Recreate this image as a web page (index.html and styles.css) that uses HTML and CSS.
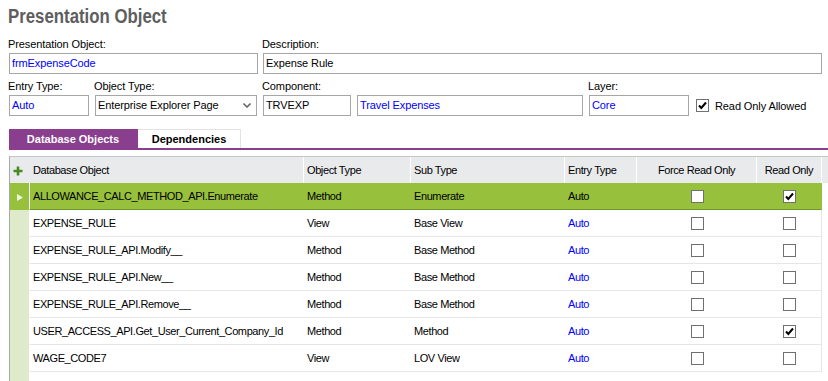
FILE: index.html
```html
<!DOCTYPE html>
<html>
<head>
	<meta charset="utf-8">
	<title>Presentation Object</title>
	<link rel="stylesheet" href="styles.css">
</head>
<body>
<div id="page">
	<h1 class="title"><span>Presentation Object</span></h1>

	<div class="form-row row-one">
		<div class="field w-po">
			<div class="label">Presentation Object:</div>
			<div class="box blue">frmExpenseCode</div>
		</div>
		<div class="field w-desc">
			<div class="label">Description:</div>
			<div class="box">Expense Rule</div>
		</div>
	</div>

	<div class="form-row row-two">
		<div class="field w-entry">
			<div class="label">Entry Type:</div>
			<div class="box blue">Auto</div>
		</div>
		<div class="field w-objtype">
			<div class="label">Object Type:</div>
			<div class="box select">
				<span>Enterprise Explorer Page</span>
				<svg class="chevron" width="8" height="5" viewBox="0 0 8 5"><polyline points="0.5,0.5 4,4 7.5,0.5" fill="none" stroke="#6a6a6a" stroke-width="1.6"/></svg>
			</div>
		</div>
		<div class="field w-comp">
			<div class="label">Component:</div>
			<div class="box">TRVEXP</div>
		</div>
		<div class="field w-travel">
			<div class="label">&nbsp;</div>
			<div class="box blue">Travel Expenses</div>
		</div>
		<div class="field w-layer">
			<div class="label">Layer:</div>
			<div class="box blue">Core</div>
		</div>
		<div class="field w-check">
			<div class="label">&nbsp;</div>
			<div class="check-line">
				<span class="cb checked"><svg width="11" height="11" viewBox="0 0 11 11"><polyline points="2,5.5 4.3,8 9,2.5" fill="none" stroke="#000" stroke-width="2"/></svg></span>
				<span>Read Only Allowed</span>
			</div>
		</div>
	</div>

	<div class="tabs">
		<div class="tab active">Database Objects</div>
		<div class="tab">Dependencies</div>
	</div>

	<div class="grid-wrap">
		<table class="grid">
			<tr class="head">
				<th class="c-gut"><svg width="10" height="10" viewBox="0 0 10 10"><path d="M5 0.5V9.5M0.5 5H9.5" stroke="#4b8a1c" stroke-width="2.6"/></svg></th>
				<th class="c-db">Database Object</th>
				<th class="c-ot">Object Type</th>
				<th class="c-st">Sub Type</th>
				<th class="c-et">Entry Type</th>
				<th class="c-fro center">Force Read Only</th>
				<th class="c-ro center">Read Only</th>
				<th class="c-fill"></th>
			</tr>
			<tr class="sel">
				<td class="c-gut"><svg width="6" height="7" viewBox="0 0 6 7"><polygon points="0,0 6,3.5 0,7" fill="#eef4e0"/></svg></td>
				<td>ALLOWANCE_CALC_METHOD_API.Enumerate</td>
				<td>Method</td>
				<td>Enumerate</td>
				<td>Auto</td>
				<td class="center"><span class="cb"></span></td>
				<td class="center c-ro"><span class="cb checked"><svg width="11" height="11" viewBox="0 0 11 11"><polyline points="2,5.5 4.3,8 9,2.5" fill="none" stroke="#000" stroke-width="2"/></svg></span></td>
				<td class="c-fill"></td>
			</tr>
			<tr>
				<td class="c-gut"></td>
				<td>EXPENSE_RULE</td>
				<td>View</td>
				<td>Base View</td>
				<td class="blue">Auto</td>
				<td class="center"><span class="cb"></span></td>
				<td class="center c-ro"><span class="cb"></span></td>
				<td class="c-fill"></td>
			</tr>
			<tr>
				<td class="c-gut"></td>
				<td>EXPENSE_RULE_API.Modify__</td>
				<td>Method</td>
				<td>Base Method</td>
				<td class="blue">Auto</td>
				<td class="center"><span class="cb"></span></td>
				<td class="center c-ro"><span class="cb"></span></td>
				<td class="c-fill"></td>
			</tr>
			<tr>
				<td class="c-gut"></td>
				<td>EXPENSE_RULE_API.New__</td>
				<td>Method</td>
				<td>Base Method</td>
				<td class="blue">Auto</td>
				<td class="center"><span class="cb"></span></td>
				<td class="center c-ro"><span class="cb"></span></td>
				<td class="c-fill"></td>
			</tr>
			<tr>
				<td class="c-gut"></td>
				<td>EXPENSE_RULE_API.Remove__</td>
				<td>Method</td>
				<td>Base Method</td>
				<td class="blue">Auto</td>
				<td class="center"><span class="cb"></span></td>
				<td class="center c-ro"><span class="cb"></span></td>
				<td class="c-fill"></td>
			</tr>
			<tr>
				<td class="c-gut"></td>
				<td>USER_ACCESS_API.Get_User_Current_Company_Id</td>
				<td>Method</td>
				<td>Method</td>
				<td class="blue">Auto</td>
				<td class="center"><span class="cb"></span></td>
				<td class="center c-ro"><span class="cb checked"><svg width="11" height="11" viewBox="0 0 11 11"><polyline points="2,5.5 4.3,8 9,2.5" fill="none" stroke="#000" stroke-width="2"/></svg></span></td>
				<td class="c-fill"></td>
			</tr>
			<tr>
				<td class="c-gut"></td>
				<td>WAGE_CODE7</td>
				<td>View</td>
				<td>LOV View</td>
				<td class="blue">Auto</td>
				<td class="center"><span class="cb"></span></td>
				<td class="center c-ro"><span class="cb"></span></td>
				<td class="c-fill"></td>
			</tr>
			<tr class="empty">
				<td class="c-gut"></td>
				<td colspan="7"></td>
			</tr>
		</table>
	</div>
</div>
</body>
</html>
```

FILE: styles.css
```css
html, body
{
	margin: 0;
	background: #fff;
	overflow: hidden;
}
#page
{
	font-family: "Liberation Sans", Arial, sans-serif;
	font-size: 11px;
	color: #000;
}
.title
{
	margin: 0;
	padding: 4px 0 0 8px;
	height: 24px;
	line-height: 24px;
	font-family: "Liberation Sans", Arial, sans-serif;
	font-size: 20px;
	font-weight: bold;
	color: #5e5e5e;
	white-space: nowrap;
}
/* the original face is a condensed bold, squeeze it */
.title span
{
	display: inline-block;
	transform: scaleX(0.84);
	transform-origin: left center;
}

/* form rows */
.form-row
{
	display: flex;
	padding-left: 9px;
	letter-spacing: -0.1px;
}
.row-one
{
	margin-top: 10px;
	gap: 5px;
}
.row-two
{
	margin-top: 6px;
	gap: 6px;
}
.label
{
	height: 13px;
	line-height: 13px;
	margin-left: -1px;
	margin-bottom: 2px;
	white-space: nowrap;
}
.box
{
	box-sizing: border-box;
	height: 21px;
	line-height: 19px;
	border: 1px solid #a6a6a6;
	padding: 0 2px;
	white-space: nowrap;
	overflow: hidden;
}
.blue
{
	color: #0000ff;
}
.select
{
	display: flex;
	align-items: center;
	justify-content: space-between;
	padding-right: 5px;
}
.w-po { width: 249px; }
.w-desc { width: 559px; }
.w-entry { width: 80px; }
.w-objtype { width: 162px; }
.w-comp { width: 88px; }
.w-travel { width: 226px; }
.w-layer { width: 100px; }
.w-check { margin-left: 1px; }
.check-line
{
	display: flex;
	align-items: center;
	gap: 6px;
	height: 21px;
}

/* checkbox */
.cb
{
	display: inline-flex;
	align-items: center;
	justify-content: center;
	box-sizing: border-box;
	width: 13px;
	height: 13px;
	border: 1px solid #707070;
	background: #fff;
	vertical-align: middle;
}

/* tabs */
.tabs
{
	display: flex;
	margin: 13px 0 0 9px;
	border-bottom: 2px solid #8a3e8e;
}
.tab
{
	box-sizing: border-box;
	height: 19px;
	line-height: 18px;
	padding: 0 13px;
	width: 103px;
	text-align: center;
	font-weight: bold;
	border-top: 1px solid #e3e3e3;
	border-right: 1px solid #e3e3e3;
}
.tab.active
{
	width: 129px;
	background: #8a3e8e;
	border-color: #8a3e8e;
	color: #fff;
}

/* grid */
.grid-wrap
{
	margin: 6px 0 0 9px;
	border-left: 1px solid #a9a9a9;
	border-top: 1px solid #c6c6c6;
}
.grid
{
	width: 818px;
	table-layout: fixed;
	border-collapse: separate;
	border-spacing: 0;
	letter-spacing: -0.4px;
}
.grid th, .grid td
{
	box-sizing: border-box;
	padding: 0 0 0 3px;
	white-space: nowrap;
	overflow: hidden;
	text-align: left;
	font-weight: normal;
}
.grid .center
{
	text-align: center;
	padding: 0;
}
.grid tr.head th
{
	height: 26px;
	background: #e9eaec;
	border-right: 1px solid #fff;
}
.grid tr.head th.c-gut
{
	border-right-color: #e9eaec;
	padding: 3px 0 0 3px;
}
.grid tr.head th.c-fill
{
	border-right: none;
}
.c-gut { width: 20px; }
.c-db { width: 274px; }
.c-ot { width: 107px; }
.c-st { width: 154px; }
.c-et { width: 72px; }
.c-fro { width: 120px; }
.c-ro { width: 65px; }
.c-fill { width: 6px; }

.grid td
{
	height: 27px;
	border-bottom: 1px solid #e6e6e6;
}
.grid td.c-gut
{
	background: #dfeaca;
	border-bottom-color: #dfeaca;
	border-right: 1px solid #fff;
}
.grid td.c-ro
{
	border-right: 1px solid #e6e6e6;
}
.grid td.c-fill
{
	border-bottom: none;
}
.grid tr.sel td
{
	background: #97c13d;
	border-bottom-color: #6f9a2a;
}
.grid tr.sel td.c-gut
{
	padding: 2px 0 0 7px;
	border-bottom-color: #97c13d;
}
.grid tr.sel td.c-ro
{
	border-right-color: #97c13d;
}
.grid tr.sel td.c-fill
{
	background: #fff;
	border-bottom: none;
}
.grid tr.empty td
{
	border-bottom: none;
}
```
